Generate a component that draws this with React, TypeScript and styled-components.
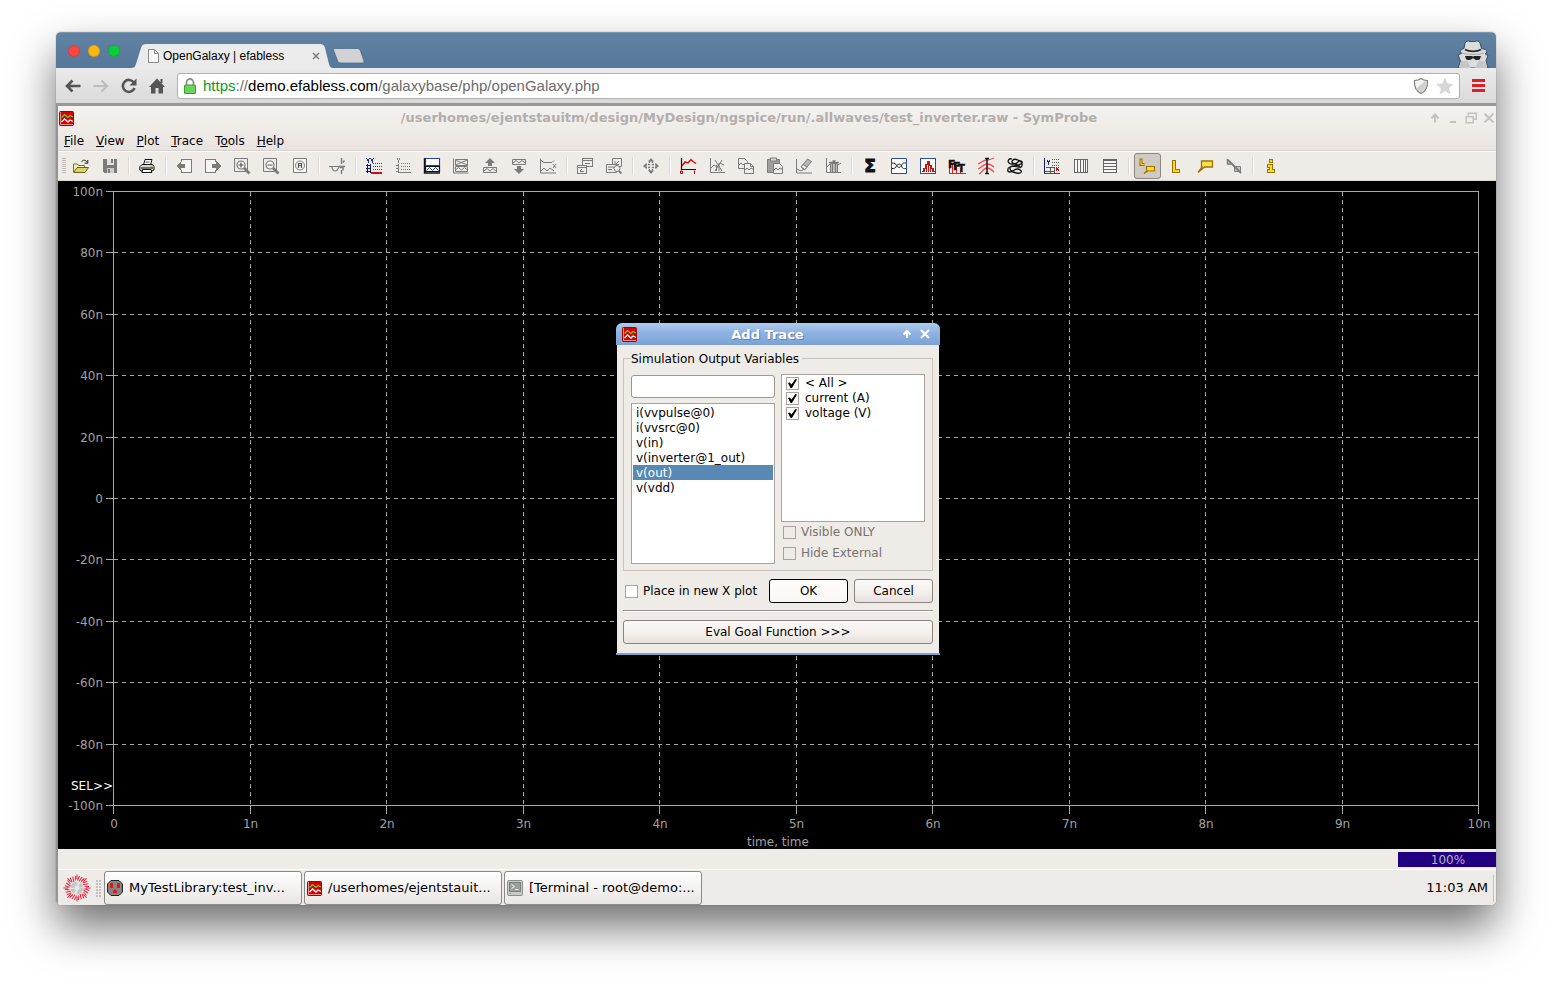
import React from "react";
import styled, { createGlobalStyle, css } from "styled-components";

const ui = '"DejaVu Sans", Verdana, sans-serif';
const chromeFont = '"Liberation Sans", Arial, sans-serif';
const panel = "#efebe7";
const gray = "#7d7b79";

const GlobalStyle = createGlobalStyle`
  *, *::before, *::after { box-sizing: border-box; }
  body { margin: 0; background: #fff; font: 12px/15px ${ui}; color: #000; }
  button, input, select { font: inherit; color: inherit; margin: 0; }
`;

const Page = styled.div`
  min-height: 100vh;
  padding: 32px 56px 80px;
  display: flex;
  flex-direction: column;
`;

const BrowserWindow = styled.div`
  flex: 1;
  display: flex;
  flex-direction: column;
  border-radius: 5px;
  overflow: hidden;
`;

const WindowShadow = styled.div`
  flex: 1;
  display: flex;
  flex-direction: column;
  border-radius: 5px;
  box-shadow: 0 0 1px rgba(0, 0, 0, 0.6), 0 22px 44px rgba(0, 0, 0, 0.56);
`;

/* ---------- browser frame ---------- */

const TabStrip = styled.header`
  height: 36px;
  display: flex;
  align-items: flex-end;
  padding: 0 7px 0 12px;
  background: linear-gradient(#6282a2, #55779a);
  border-top: 1px solid #7d98b3;
`;

const Lights = styled.div`
  display: flex;
  gap: 8px;
  align-self: center;
  margin-right: 11px;
`;

const Light = styled.button<{ $color: string }>`
  width: 12px;
  height: 12px;
  padding: 0;
  border: 1px solid rgba(0, 0, 0, 0.12);
  border-radius: 50%;
  background: ${(p) => p.$color};
`;

const Tab = styled.div`
  position: relative;
  width: 202px;
  height: 24px;
  display: flex;
  align-items: center;
  padding: 0 13px 0 17px;
  font: 12px/16px ${chromeFont};
`;

const TabShape = styled.svg`
  position: absolute;
  inset: 0;
`;

const PageGlyph = styled.svg`
  position: relative;
`;

const TabLabel = styled.span`
  position: relative;
  flex: 1;
  margin-left: 4px;
  white-space: nowrap;
`;

const BareButton = styled.button`
  position: relative;
  padding: 0;
  border: 0;
  background: none;
  display: flex;
  align-items: center;
  justify-content: center;
`;

const NewTab = styled(BareButton)`
  margin-bottom: 4px;
`;

const Incognito = styled.svg`
  margin-left: auto;
`;

const NavBar = styled.nav`
  height: 38px;
  display: flex;
  align-items: center;
  padding: 0 11px 0 3px;
  background: linear-gradient(#ebebeb, #d9d9d9);
  border-bottom: 3px solid #989898;
`;

const NavButton = styled(BareButton)`
  width: 28px;
  height: 24px;
`;

const AddressBar = styled.div`
  flex: 1;
  height: 26px;
  margin-left: 6px;
  padding: 0 5px 0 6px;
  display: flex;
  align-items: center;
  gap: 7px;
  background: #fff;
  border: 1px solid #b0b0b0;
  border-radius: 3px;
`;

const Url = styled.div`
  flex: 1;
  font: 15px/18px ${chromeFont};
  color: #6c6c6c;
  white-space: nowrap;
`;

const Scheme = styled.span`
  color: #0a9a1c;
`;

const Host = styled.span`
  color: #000;
`;

const MenuToggle = styled(BareButton)`
  width: 14px;
  margin-left: 11px;
`;

/* ---------- application ---------- */

const Viewer = styled.main`
  flex: 1;
  display: flex;
  flex-direction: column;
  border-left: 2px solid #949494;
  background: ${panel};
`;

const AppTitleBar = styled.div`
  height: 24px;
  display: flex;
  align-items: center;
  padding-left: 1px;
  background: linear-gradient(#f3f2f1, ${panel});
`;

const AppTitle = styled.h1`
  flex: 1;
  margin: 0;
  font: bold 13px/16px ${ui};
  text-align: center;
  color: #b3aeab;
  white-space: nowrap;
`;

const WindowButton = styled(BareButton)`
  width: 18px;
  height: 18px;
`;

const WindowButtons = styled.div`
  display: flex;

  ${WindowButton} {
    padding-left: 4px;
  }
`;

const MenuBar = styled.div`
  height: 21px;
  display: flex;
  align-items: center;
  background: linear-gradient(${panel}, #e9e3df);
`;

const MenuItem = styled.button`
  padding: 0 6px;
  border: 0;
  background: none;
  line-height: 18px;
`;

const ToolBar = styled.div`
  height: 30px;
  display: flex;
  align-items: center;
  border-top: 1px solid #fbfaf9;
  border-bottom: 1px solid #dcd7d3;
  background: ${panel};
  box-shadow: 0 -1px 0 #d8d2ce;
`;

const Grip = styled.div`
  width: 4px;
  height: 16px;
  margin: 0 1px 0 4px;
  background: repeating-linear-gradient(#c0bbb8 0 1px, transparent 1px 2px);
`;

const ToolSeparator = styled.div`
  width: 2px;
  height: 18px;
  margin: 0 3px;
  border-left: 1px solid #dcd7d3;
  border-right: 1px solid #fff;
`;

const ToolButton = styled.button<{ $active?: boolean }>`
  width: 27px;
  height: 26px;
  margin: 0 1px;
  padding: 0 1px 0 0;
  display: flex;
  align-items: center;
  justify-content: center;
  border: 1px solid transparent;
  border-radius: 3px;
  background: none;
  ${(p) =>
    p.$active &&
    css`
      border-color: #8d8681;
      background: #d0cac5;
    `}
`;

const PlotArea = styled.section`
  position: relative;
  flex: 1;
  min-height: 520px;
  display: flex;
  padding: 10px 18px 44px 55px;
  background: #000;
`;

const PlotFrame = styled.div`
  flex: 1;
  display: flex;
`;

const PlotSvg = styled.svg`
  flex: 1;
  width: 100%;
  overflow: visible;
  font: 12px ${ui};
  fill: #a0a0a0;
  stroke-width: 1px;
`;

const AxisTitle = styled.div`
  position: absolute;
  left: 0;
  right: 0;
  bottom: 0;
  padding-left: 2px;
  line-height: 14px;
  text-align: center;
  color: #a0a0a0;
`;

const StatusBar = styled.div`
  height: 21px;
  display: flex;
  justify-content: flex-end;
  padding: 3px 0 2px;
  border-bottom: 1px solid #fff;
`;

const Progress = styled.div`
  width: 98px;
  height: 15px;
  padding-left: 2px;
  line-height: 17px;
  text-align: center;
  background: #200080;
  color: #b8b4c4;
`;

const TaskBar = styled.footer`
  height: 35px;
  display: flex;
  align-items: center;
  gap: 2px;
  padding: 1px 1px 0 4px;
  background: #eeeae8;
  font: 13px/16px ${ui};
`;

const StartButton = styled(BareButton)`
  width: 30px;
`;

const TaskGrip = styled.div`
  width: 5px;
  height: 17px;
  margin: 0 1px 0 2px;
  background: radial-gradient(circle at 1px 1px, #c4c0bd 1px, transparent 1px) 0 0 / 3px 3px;
`;

const TaskButton = styled.button`
  width: 198px;
  height: 34px;
  display: flex;
  align-items: center;
  gap: 6px;
  padding: 0 2px;
  border: 1px solid #8d8987;
  border-radius: 3px;
  background: linear-gradient(#fff, #f4f2f1 50%, #e9e5e3);
  white-space: nowrap;
  text-align: left;
`;

const Clock = styled.time`
  margin-left: auto;
  padding-right: 3px;
`;

const ClockEdge = styled.div`
  width: 2px;
  height: 27px;
  border-left: 1px solid #c4c0bd;
`;

/* ---------- dialog ---------- */

const Dialog = styled.div`
  position: absolute;
  top: 142px;
  left: calc(50% - 161px);
  width: 324px;
  border-bottom: 2px solid #7ba2d6;
  border-radius: 6px 6px 0 0;
`;

const DialogTitleBar = styled.div`
  height: 22px;
  display: flex;
  align-items: center;
  padding: 0 6px;
  border-radius: 6px 6px 0 0;
  background: linear-gradient(#aecbee, #8fb2e2 45%, #7ba2d6);
`;

const DialogTitle = styled.h2`
  flex: 1;
  margin: 0;
  font: bold 13px/20px ${ui};
  padding-top: 2px;
  text-align: center;
  color: #fff;
  text-shadow: 1px 1px 0 #5d84b9;
`;

const DialogBody = styled.form`
  margin: 0 1px;
  padding: 6px 6px 9px;
  background: ${panel};
`;

const Group = styled.fieldset`
  margin: 0;
  padding: 9px 7px 6px;
  border: 1px solid #c9c3bf;
`;

const Legend = styled.legend`
  height: 14px;
  padding: 0 3px 0 0;
  line-height: 16px;
`;

const Columns = styled.div`
  display: grid;
  grid-template-columns: 1fr 1fr;
  gap: 6px;
`;

const LeftColumn = styled.div`
  min-width: 0;
  display: flex;
  flex-direction: column;
  gap: 5px;
  padding-top: 1px;
`;

const FilterInput = styled.input`
  width: 100%;
  height: 23px;
  padding: 0 4px;
  border: 1px solid #9d9591;
  border-radius: 3px;
  background: #fff;
`;

const VariableList = styled.select`
  width: 100%;
  height: 161px;
  padding: 1px;
  border: 1px solid #a9a29e;
  border-radius: 0;
  outline: 0;
  background: #fff;
  overflow: hidden;

  option {
    height: 15px;
    min-height: 15px;
    padding: 1px 3px 0;
    line-height: 15px;
  }
  option:checked {
    background: #5888b5 linear-gradient(#5888b5, #5888b5);
    color: #fff;
  }
`;

const KindBox = styled.div`
  height: 148px;
  padding: 1px 4px;
  border: 1px solid #a9a29e;
  background: #fff;
`;

const CheckLabel = styled.label<{ $gap: number; $height: number; $muted?: boolean }>`
  height: ${(p) => p.$height}px;
  display: flex;
  align-items: center;
  gap: ${(p) => p.$gap}px;
  white-space: nowrap;
  color: ${(p) => (p.$muted ? "#767270" : "#000")};
`;

const OptionRows = styled.div`
  padding-left: 2px;
`;

const CheckBox = styled.input`
  appearance: none;
  flex: none;
  width: 13px;
  height: 13px;
  display: grid;
  place-content: center;
  border: 1px solid #a9a29e;
  background: #fff;

  &:disabled {
    background: ${panel};
  }
  &:checked::after {
    content: "";
    width: 9px;
    height: 9px;
    background: #000;
    clip-path: polygon(0 45%, 20% 38%, 38% 62%, 82% 0, 100% 6%, 44% 100%, 28% 100%);
  }
`;

const Actions = styled.div`
  display: flex;
  align-items: center;
  gap: 6px;
  margin-top: 8px;
  padding-left: 2px;
`;

const Spacer = styled.div`
  flex: 1;
`;

const DialogButton = styled.button<{ $primary?: boolean; $wide?: boolean }>`
  width: ${(p) => (p.$wide ? "100%" : "80px")};
  height: 24px;
  padding: 0;
  border: 1px solid ${(p) => (p.$primary ? "#000" : "#8a8380")};
  border-radius: 3px;
  background: ${(p) => (p.$primary ? "linear-gradient(#fffdfb, #faf6f3)" : "linear-gradient(#fbf9f8, #f3efec 60%, #e6e0dc)")};
`;

const Rule = styled.hr`
  height: 2px;
  margin: 7px 0 8px;
  border: 0;
  border-top: 1px solid #9a9491;
  border-bottom: 1px solid #fff;
`;

/* ---------- icons ---------- */

type IconProps = { children: React.ReactNode; size?: number; soft?: boolean };

const Icon = ({ children, size = 16, soft }: IconProps) => (
  <svg
    width={size}
    height={size}
    viewBox="0 0 16 16"
    fill="none"
    stroke={gray}
    shapeRendering={soft ? "auto" : "crispEdges"}
    overflow="visible"
    aria-hidden="true"
  >
    {children}
  </svg>
);

const ProbeIcon = () => (
  <svg width="15" height="15" viewBox="0 0 15 15" fill="none" aria-hidden="true">
    <rect x="0.5" y="0.5" width="14" height="14" rx="1" fill="#d80000" stroke="#a00000" />
    <path d="M1.500 1v12.500h12.500" stroke="#f4b0b0" strokeWidth="0.800" />
    <path d="M2.500 6.500 5.500 3.500 9 6.500l2-2 3 1.500" stroke="#5fcf2a" strokeWidth="1.200" />
    <path d="M2.500 11 5.500 8 9 11l2-2 3 1.500" stroke="#fff" strokeWidth="1.300" />
  </svg>
);

const dots = (x: number, y: number, w: number, h: number) => {
  const out = [];
  for (let i = 0; i < w; i++)
    for (let j = 0; j < h; j++)
      out.push(<rect key={`${i}-${j}`} x={x + i * 2} y={y + j * 3} width="1" height="1" stroke="none" />);
  return out;
};

const tools: Record<string, React.ReactNode> = {
  Open: (
    <Icon soft>
      <path d="M.5 14V6h4l1 1.500h6V10" fill="#f6f2a8" stroke="#77702a" />
      <path d="M.7 14.500 4 9.500h11.500l-3.500 5Z" fill="#d9d274" stroke="#6a6420" />
      <path d="M8.500 4c1.500-2.500 4-2.500 5.500.5M14.800 2v3.200h-3.200" stroke="#222" />
    </Icon>
  ),
  Save: (
    <Icon>
      <path d="M1 1h14v14H2l-1-1Z" fill={gray} stroke="none" />
      <path d="M5 1h7v6H5Z" fill="#e4e0dd" stroke="none" />
      <path d="M5 10h7v5H5Z" fill="#cfcbc8" stroke="none" />
      <path d="M6 11h2v4H6ZM9 1h2v4H9Z" fill={gray} stroke="none" />
    </Icon>
  ),
  Print: (
    <Icon soft>
      <path d="M4.500 7 6 1.500h7L11.500 7" fill="#fff" stroke="#111" />
      <path d="M6.500 4h4" stroke="#555" />
      <path d="M1 8.500 3 6.500h10.500l1.500 2V12L13 13H2L.7 12Z" fill="#d8d6d4" stroke="#111" />
      <path d="M2 10h12" stroke="#111" />
      <path d="M3.500 11.500h8.500l.8 3H3Z" fill="#fff" stroke="#111" />
      <path d="M11.500 8.500h2" stroke="#8cc63f" />
    </Icon>
  ),
  "Previous page": (
    <Icon>
      <path d="M5.500 4V1.500h10v13h-10V12" fill="#f8f6f4" />
      <path d="M0 8 5 3v3h4v4H5v3Z" fill={gray} stroke="none" />
    </Icon>
  ),
  "Next page": (
    <Icon>
      <path d="M10.500 4V1.500H.5v13h10V12" fill="#f8f6f4" />
      <path d="M16 8l-5-5v3H7v4h4v3Z" fill={gray} stroke="none" />
    </Icon>
  ),
  "Zoom in": (
    <Icon soft>
      <path d="M.5.500h13v13H.5Z" />
      <circle cx="7" cy="7" r="4" fill="#f8f6f4" strokeWidth="1.200" />
      <path d="M7 4.500v5M4.500 7h5" stroke="#555" strokeWidth="1.200" />
      <path d="m10 10 5.500 5.500" strokeWidth="2.800" />
    </Icon>
  ),
  "Zoom out": (
    <Icon soft>
      <path d="M.5.500h13v13H.5Z" />
      <circle cx="7" cy="7" r="4" fill="#f8f6f4" strokeWidth="1.200" />
      <path d="M4.500 7h5" stroke="#555" strokeWidth="1.200" />
      <path d="m10 10 5.500 5.500" strokeWidth="2.800" />
    </Icon>
  ),
  "Zoom all": (
    <Icon soft>
      <path d="M1.500.500h13v14h-13Z" fill="#f8f6f4" />
      <circle cx="8" cy="7.500" r="4.500" />
      <path d="M6.500 10V5.500h3V10M6.500 7.500h3" stroke="#555" strokeWidth="1.200" />
    </Icon>
  ),
  Cut: (
    <Icon soft>
      <path d="M0 8.500h9M3 9c0 2 1.500 4 3.500 4S9 11 10 9" strokeWidth="1.200" />
      <path d="M12.500 0v6M12.500 12v4M9 8.500h7" strokeWidth="1.400" />
      <path d="M11 9.500h3v3M14 4.500l1.500-2" strokeWidth="1.500" />
    </Icon>
  ),
  "Add Y axis": (
    <Icon>
      <path d="M.5.500 2 3v2M3.500.500 2 3M4.500.500 6 3v2M7.500.500 6 3" stroke="#1c2f86" />
      <path d="M1.500 6v9M4.500 6v9" stroke="#0d1c62" />
      <path d="M0 7.500h5M0 10.500h5M0 13.500h5" stroke="#0d1c62" />
      <g fill="#444">{dots(7, 5, 5, 3)}</g>
      <path d="M5 15h11" stroke="#cc1111" strokeWidth="2" />
    </Icon>
  ),
  "Delete Y axis": (
    <Icon>
      <path d="M2 .5 3.500 3v2M5 .5 3.500 3" />
      <path d="M3.500 6v9M1 7.500h3M1 10.500h3M1 13.500h3" />
      <g fill={gray}>{dots(6, 5, 5, 3)}</g>
      <path d="M3 14.500h13" />
    </Icon>
  ),
  "Add plot": (
    <Icon soft>
      <path d="M1.500.500h14v7h-14Z" fill="#fff" stroke="#1b45b4" strokeWidth="1.200" />
      <path d="M1.500 8.500h14v5h-14Z" fill="#fff" stroke="#111" strokeWidth="1.200" />
      <path d="m2.500 12.500 3-3 3 3 3-3 3 3" stroke="#1b45b4" />
      <path d="M.5 0v15h15.500" stroke="#111" strokeWidth="1.400" />
    </Icon>
  ),
  "Delete plot": (
    <Icon soft>
      <path d="M2.500 1.500h12v6h-12ZM2.500 8.500h12v5h-12ZM2 2l12.500 5M14.500 2 2 7" />
      <path d="m2.500 12 3-2.500 3 2.500 3-2.500 3 2.500" />
      <path d="M.5.500v14.500h15" />
    </Icon>
  ),
  "Move plot up": (
    <Icon soft>
      <path d="m8 0 5 5h-3v3H6V5H3Z" fill={gray} stroke="none" />
      <path d="M1.500 9.500h13v5h-13Z" />
      <path d="m2 13 3-2.500L8 13l3-2.500 3 2.500" />
    </Icon>
  ),
  "Move plot down": (
    <Icon soft>
      <path d="M1.500 1.500h13v5h-13Z" />
      <path d="m2 5 3-2.500L8 5l3-2.500L14 5" />
      <path d="m8 16 5-5h-3V8H6v3H3Z" fill={gray} stroke="none" />
    </Icon>
  ),
  "Sync plots": (
    <Icon soft>
      <path d="M.5.500v14.500H16" />
      <path d="m1 2.500 3 2h8l2-2M1 13l3-3 3 3 3-3 4 3M13 6l3 4M16 6l-3 4" />
    </Icon>
  ),
  Windows: (
    <Icon>
      <path d="M5.500.500h10v8h-10Z" fill={panel} />
      <path d="M6 2h9M8 5.500h5" />
      <path d="M.5 7.500h9v8h-9Z" fill={panel} />
      <path d="M1 9h8M3 13l2-2M3 13.500h4" />
    </Icon>
  ),
  "Find window": (
    <Icon soft>
      <path d="M6.500.500h9v8h-9ZM9 3v3.500h4M10 6l3-3" />
      <path d="M.5 6.500h10v8H.5Z" fill={panel} />
      <path d="M2 9h6M2 11.500h4" />
      <circle cx="11" cy="10.500" r="3" fill={panel} />
      <path d="m13 13 2.500 2.500" strokeWidth="1.800" />
    </Icon>
  ),
  Pan: (
    <Icon soft>
      <path d="M8 0l3 3.500H5ZM8 16l3-3.500H5ZM0 8l3.500-3v6ZM16 8l-3.500-3v6Z" fill={gray} stroke="none" />
      <path d="M6.500 3v3.500H3M9.500 3v3.500H13M6.500 13V9.500H3M9.500 13V9.500H13" strokeDasharray="2 1" strokeWidth="1.300" />
    </Icon>
  ),
  "Add trace": (
    <Icon soft>
      <path d="M1.500 0v11.500H16" stroke="#111" strokeWidth="1.200" />
      <path d="m2 8 3-4 3 1 3-3.500 2 2 3 2" stroke="#e01010" strokeWidth="1.500" />
      <path d="M.5 13h2v2.500h-2ZM14.500 12.500V16" stroke="#b00000" />
    </Icon>
  ),
  "Delete trace": (
    <Icon soft>
      <path d="M1.500 0v14.500H16" />
      <path d="m2 10 3-3 3 2 3-4 4 2M6 2l7 11M13 2 6 13M7.500 13V7M10 13V5" />
    </Icon>
  ),
  Copy: (
    <Icon soft>
      <path d="M.5.500h6l3 3v7h-9Z" fill={panel} />
      <path d="M6.500 5.500h6l3 3v7h-9Z" fill={panel} />
      <path d="m1 7 2-2 2 2 1-1M7 12l2-2 2 2 2-2 2 1M12.500 5.500v3h3" />
    </Icon>
  ),
  Paste: (
    <Icon soft>
      <path d="M.5 1.500h12v13H.5Z" fill="#a19e9b" />
      <path d="M3.500 0h6v3h-6Z" fill="#dcd8d5" />
      <path d="M6.500 5.500h6l3 3v7h-9Z" fill={panel} />
      <path d="m7 12 2-2 2 2 2-2 2 1" />
    </Icon>
  ),
  Erase: (
    <Icon soft>
      <path d="M.5 1v14H16" />
      <path d="m1 11 4 2 3-2" />
      <path d="M5 9 11.500 1l4 2.500-6.500 8Z" fill="#b9b5b2" />
      <path d="M5 9 7 6.500l4 2.500-2 2.500Z" fill={panel} />
    </Icon>
  ),
  "Erase all": (
    <Icon soft>
      <path d="M1.500 0v14.500H16M2 9l3-3M13 7l3-2" />
      <path d="M5.500 5.500h7v9h-7Z" fill="#c9c5c2" />
      <path d="M4 4.500h10M7.500 3h3M7.500 6v8M10.500 6v8" strokeWidth="1.300" />
    </Icon>
  ),
  Evaluate: (
    <Icon soft>
      <text x="8" y="14" textAnchor="middle" fontFamily="DejaVu Sans" fontWeight="bold" fontSize="17" fill="#111" stroke="#111">
        Σ
      </text>
    </Icon>
  ),
  "Eye diagram": (
    <Icon soft>
      <path d="M.5.500h15v15H.5Z" fill="#fff" stroke="#27508f" />
      <path d="M1 5c3 0 3.500.5 4.500 2.500s4 3 5 0S13 5 15 5M1 10.500c3 0 3.500-.5 4.500-2.500s4-3 5 0 2.500 2.500 4.500 2.500" stroke="#222" />
    </Icon>
  ),
  Histogram: (
    <Icon>
      <path d="M.5.500h15v15H.5Z" fill="#fff" stroke="#27508f" />
      <path d="M4.500 14v-3M6.500 14V6M8.500 14V4M10.500 14V8M12.500 14v-3" stroke="#d01010" />
      <path d="M2 13.500h1v-3h2v-4h2v-3h2v4h2v3h2v3h2" stroke="#d01010" />
    </Icon>
  ),
  FFT: (
    <svg width="18" height="16" viewBox="0 0 18 16" overflow="visible" aria-hidden="true">
      <path d="M1.500 15V3M4.500 15.500V6M8.500 15.500V9M12.500 15.500V10M1 15.500h17" stroke="#e02020" fill="none" />
      <text x="0" y="10" fontFamily="DejaVu Sans" fontWeight="bold" fontSize="11" fill="#111" stroke="#111" strokeWidth="0.500">F</text>
      <text x="5" y="12" fontFamily="DejaVu Sans" fontWeight="bold" fontSize="11" fill="#111" stroke="#111" strokeWidth="0.500">F</text>
      <text x="10" y="14" fontFamily="DejaVu Sans" fontWeight="bold" fontSize="10" fill="#111" stroke="#111" strokeWidth="0.500">T</text>
    </svg>
  ),
  Performance: (
    <Icon soft>
      <path d="M0 6c3-1 5-4 9-4 3 0 5-1 7-2M0 11c3-1 5-5 9-5 3 0 5 1 7 3M1 16c3-1 4-6 8-6 3 0 5 2 7 4" stroke="#f05060" strokeWidth="1.300" />
      <path d="M9 1v14M7 .5h4M7 15.500h4" stroke="#111" strokeWidth="1.500" />
    </Icon>
  ),
  Nyquist: (
    <Icon soft>
      <path
        d="M5 1C2 0 0 3 2 5s7 1 9-1 5-1 4 1-9 3-12 4-3 5 0 5 4-3 7-3 5 2 4 3.500-8 .5-10-2S3 8 6 8s6 2 8 1 1-5-1-6-5-3-7-1-1 3 2 4 5 2 6 4"
        stroke="#111"
        strokeWidth="1.300"
      />
    </Icon>
  ),
  Axes: (
    <Icon>
      <path d="M.5 0v15" stroke="#0d1c62" />
      <path d="M2 9.500h8M6.500 9v6M1 13.500h9M10.500 9v6" stroke="#555" />
      <path d="m3 2 1.500 2.500v2.500M6 2 4.500 4.500" stroke="#1c2f86" />
      <g fill="#555">{dots(8, 1, 4, 3)}</g>
      <path d="m12 9 3 4M15 9l-3 4" stroke="#cc1111" />
      <path d="M0 15.500h16" stroke="#cc1111" />
    </Icon>
  ),
  "Vertical grid": (
    <Icon>
      <path d="M1.500 1.500h13v13h-13Z" fill="#f8f6f4" stroke="#666" />
      <path d="M4.500 2v12M7.500 2v12M10.500 2v12M12.500 2v12" stroke="#666" />
    </Icon>
  ),
  "Horizontal grid": (
    <Icon>
      <path d="M1.500 1.500h13v13h-13Z" fill="#f8f6f4" stroke="#666" />
      <path d="M2 2.500h12M2 5.500h12M2 8.500h12M2 11.500h12" stroke="#666" />
    </Icon>
  ),
  "Cursor labels": (
    <Icon soft>
      <path d="M2 .5v6h3.500" stroke="#9a7400" strokeWidth="3" />
      <path d="M2 1.500v5h3" stroke="#ffd51e" strokeWidth="1" />
      <path d="M7.500 8.500h8v4.500H9L5 15.500 8 13h-.5Z" fill="#ffdb2e" stroke="#9a7400" strokeWidth="1.200" />
    </Icon>
  ),
  Marker: (
    <Icon>
      <path d="M5.500 2v11h6" stroke="#9a7400" strokeWidth="4" />
      <path d="M5.500 3v10H11" stroke="#ffd51e" strokeWidth="2" />
    </Icon>
  ),
  Note: (
    <Icon soft>
      <path d="M4.500 3h11v6H7.500L1 14.500 5 9h-.5Z" fill="#ffe04a" stroke="#9a7400" strokeWidth="1.300" />
    </Icon>
  ),
  "Hide labels": (
    <Icon soft>
      <path d="M1.500 1v5h4" strokeWidth="1.500" />
      <path d="M8.500 8.500h6v5h-6Z" fill="#c9c5c2" />
      <path d="m2 2 13 13" strokeWidth="2" />
    </Icon>
  ),
  Info: (
    <Icon>
      <path d="M6.500 1.500h3v3h-3Z" fill="#ffdb2e" stroke="#9a7400" />
      <path d="M4.500 6.500h5v5h2v3h-7v-3h2v-2h-2Z" fill="#ffdb2e" stroke="#9a7400" />
    </Icon>
  ),
};

const toolGroups: string[][] = [
  ["Open", "Save"],
  ["Print"],
  ["Previous page", "Next page", "Zoom in", "Zoom out", "Zoom all"],
  ["Cut"],
  ["Add Y axis", "Delete Y axis", "Add plot", "Delete plot", "Move plot up", "Move plot down", "Sync plots"],
  ["Windows", "Find window"],
  ["Pan"],
  ["Add trace", "Delete trace", "Copy", "Paste", "Erase", "Erase all"],
  ["Evaluate", "Eye diagram", "Histogram", "FFT", "Performance", "Nyquist"],
  ["Axes", "Vertical grid", "Horizontal grid"],
  ["Cursor labels", "Marker", "Note", "Hide labels"],
  ["Info"],
];

const menus: [string, string, string][] = [
  ["", "F", "ile"],
  ["", "V", "iew"],
  ["", "P", "lot"],
  ["", "T", "race"],
  ["T", "o", "ols"],
  ["", "H", "elp"],
];

const yLabels = ["100n", "80n", "60n", "40n", "20n", "0", "-20n", "-40n", "-60n", "-80n", "-100n"];
const xLabels = ["0", "1n", "2n", "3n", "4n", "5n", "6n", "7n", "8n", "9n", "10n"];
const variables = ["i(vvpulse@0)", "i(vvsrc@0)", "v(in)", "v(inverter@1_out)", "v(out)", "v(vdd)"];
const kinds = ["< All >", "current (A)", "voltage (V)"];

const Plot = () => (
  <PlotFrame>
    <PlotSvg role="img" aria-label="Empty waveform plot">
      <g stroke="#a8a8a8" shapeRendering="crispEdges" transform="translate(0.6 0.5)">
        {yLabels.map((label, i) => (
          <g key={label}>
            <line x1="-8" x2="0" y1={`${i * 10}%`} y2={`${i * 10}%`} />
            {i > 0 && i < 10 && (
              <line x1="0" x2="100%" y1={`${i * 10}%`} y2={`${i * 10}%`} strokeDasharray="4 4" />
            )}
          </g>
        ))}
        {xLabels.map((label, i) => (
          <g key={label}>
            <svg y="100%" overflow="visible">
              <line x1={`${i * 10}%`} x2={`${i * 10}%`} y1="0" y2="8" />
            </svg>
            {i > 0 && i < 10 && (
              <line x1={`${i * 10}%`} x2={`${i * 10}%`} y1="0" y2="100%" strokeDasharray="4 4" />
            )}
          </g>
        ))}
        <rect width="100%" height="100%" fill="none" />
      </g>
      {yLabels.map((label, i) => (
        <text key={label} x="-10" y={`${i * 10}%`} dy="5" textAnchor="end">
          {label}
        </text>
      ))}
      {xLabels.map((label, i) => (
        <text key={label} x={`${i * 10}%`} y="100%" dx="1" dy="23" textAnchor="middle">
          {label}
        </text>
      ))}
      <text x="0" y="100%" dy="-15" textAnchor="end" fill="#fff">
        SEL&gt;&gt;
      </text>
    </PlotSvg>
  </PlotFrame>
);

const AddTraceDialog = () => (
  <Dialog role="dialog" aria-labelledby="add-trace-title">
    <DialogTitleBar>
      <ProbeIcon />
      <DialogTitle id="add-trace-title">Add Trace</DialogTitle>
      <WindowButton aria-label="Shade">
        <svg width="10" height="10" viewBox="0 0 10 10" aria-hidden="true">
          <path d="M5 9V3M1.500 5.500 5 2l3.500 3.500" fill="none" stroke="#fff" strokeWidth="2" />
        </svg>
      </WindowButton>
      <WindowButton aria-label="Close">
        <svg width="10" height="10" viewBox="0 0 10 10" aria-hidden="true">
          <path d="m1 1 8 8M9 1 1 9" stroke="#fff" strokeWidth="2.200" />
        </svg>
      </WindowButton>
    </DialogTitleBar>
    <DialogBody onSubmit={(e) => e.preventDefault()}>
      <Group>
        <Legend>Simulation Output Variables</Legend>
        <Columns>
          <LeftColumn>
            <FilterInput type="text" aria-label="Filter variables" />
            <VariableList size={10} defaultValue="v(out)" aria-label="Variables">
              {variables.map((v) => (
                <option key={v}>{v}</option>
              ))}
            </VariableList>
          </LeftColumn>
          <div>
            <KindBox>
              {kinds.map((k) => (
                <CheckLabel key={k} $gap={6} $height={15}>
                  <CheckBox type="checkbox" defaultChecked />
                  {k}
                </CheckLabel>
              ))}
            </KindBox>
            <OptionRows>
              {["Visible ONLY", "Hide External"].map((o) => (
                <CheckLabel key={o} $gap={5} $height={21} $muted>
                  <CheckBox type="checkbox" disabled />
                  {o}
                </CheckLabel>
              ))}
            </OptionRows>
          </div>
        </Columns>
      </Group>
      <Actions>
        <CheckLabel $gap={5} $height={24}>
          <CheckBox type="checkbox" />
          Place in new X plot
        </CheckLabel>
        <Spacer />
        <DialogButton $primary>OK</DialogButton>
        <DialogButton type="button">Cancel</DialogButton>
      </Actions>
      <Rule />
      <DialogButton $wide type="button">
        Eval Goal Function &gt;&gt;&gt;
      </DialogButton>
    </DialogBody>
  </Dialog>
);

const Burst = () => (
  <svg width="28" height="28" viewBox="-14 -14 28 28" fill="none" aria-hidden="true">
    <circle r="4.500" stroke="#c4c6ca" strokeWidth="4" strokeDasharray="7 2 4 1" />
    {Array.from({ length: 8 }, (_, i) => (
      <g key={i} transform={`rotate(${i * 45})`} stroke="#ea2a40" strokeWidth="1.100">
        <path d="M0-13.500V-9M2.500-12 .5-7.500M5-11 2-6.500M7.500-9.500 4-6.500" />
      </g>
    ))}
  </svg>
);

const Browser = () => (
  <>
    <TabStrip>
      <Lights>
        <Light $color="#fb4646" aria-label="Close window" />
        <Light $color="#fdb90c" aria-label="Minimize window" />
        <Light $color="#0bce3c" aria-label="Zoom window" />
      </Lights>
      <Tab>
        <TabShape width="202" height="24" viewBox="0 0 202 24" aria-hidden="true">
          <path d="M0 24c3 0 4-1 5-4L10 4c1-3 2-4 5-4h174c3 0 4 1 5 4l4 16c1 3 2 4 4 4Z" fill="#ebebeb" />
        </TabShape>
        <PageGlyph width="11" height="14" viewBox="0 0 11 14" aria-hidden="true">
          <path d="M.5.500h6l4 4v9H.5ZM6.500.500v4h4" fill="#fafafa" stroke="#8a8a8a" />
        </PageGlyph>
        <TabLabel>OpenGalaxy | efabless</TabLabel>
        <BareButton aria-label="Close tab">
          <svg width="8" height="8" viewBox="0 0 8 8" aria-hidden="true">
            <path d="m1 1 6 6M7 1 1 7" stroke="#7d7d7d" strokeWidth="1.500" />
          </svg>
        </BareButton>
      </Tab>
      <NewTab aria-label="New tab">
        <svg width="31" height="16" viewBox="0 0 31 16" aria-hidden="true">
          <path d="M2 .5h22c2 0 3 1 3.500 2.500L31 13c0 1.500-.5 2-2 2H8c-2 0-3-1-3.500-2.500L.5 2C.5 1 1 .5 2 .5Z" fill="#d2d2d4" stroke="#46678a" strokeWidth="0.700" />
        </svg>
      </NewTab>
      <Incognito width="32" height="28" viewBox="0 0 32 28" aria-hidden="true">
        <path d="M8 3c1-2 3-2.500 5-1.500h5C20 .5 22 1 23 3l1.500 5.500C28 9 30 10 30 12l-2 2 3 1.500-2 5 2 7.500H1l2.500-7L1 15l3.500-1.500-1-2C3.500 10 5 9 7 8.500Z" fill="#dcdcdc" stroke="#384e63" />
        <path d="M8 9.500c4 2.500 12 2.500 16 0" fill="none" stroke="#2a2a2a" strokeWidth="1.800" />
        <path d="M5 13c6 2 16 2 22 0" fill="none" stroke="#a8a8a8" />
        <path d="M8 16h7l1 .8 1-.8h7l-1 3c-1 1.500-5 1.500-6-.5h-2c-1 2-5 2-6 .5Z" fill="#222" />
        <path d="m4 21.500 6-1 4 7.500H2.500ZM28 21.500l-6-1-4 7.500h12Z" fill="#c6c6c6" />
      </Incognito>
    </TabStrip>
    <NavBar>
      <NavButton aria-label="Back">
        <svg width="16" height="14" viewBox="0 0 16 14" fill="none" aria-hidden="true">
          <path d="M15.500 7H2M7.500 1.500 2 7l5.500 5.500" stroke="#555" strokeWidth="2.600" />
        </svg>
      </NavButton>
      <NavButton aria-label="Forward">
        <svg width="16" height="14" viewBox="0 0 16 14" fill="none" aria-hidden="true">
          <path d="M.5 7H14M8.500 1.500 14 7l-5.500 5.500" stroke="#bdbdbd" strokeWidth="2.200" />
        </svg>
      </NavButton>
      <NavButton aria-label="Reload">
        <svg width="16" height="16" viewBox="0 0 16 16" fill="none" aria-hidden="true">
          <path d="M12.800 4.500A6 6 0 1 0 13.500 10" stroke="#555" strokeWidth="2.600" />
          <path d="M15.500.500v7h-7Z" fill="#555" />
        </svg>
      </NavButton>
      <NavButton aria-label="Home">
        <svg width="16" height="16" viewBox="0 0 16 16" aria-hidden="true">
          <path d="M8 .5 16 9h-2v6.500H9.500V10h-3v5.500H2V9H0Z" fill="#555" />
          <path d="M11.500 1h2v4h-2Z" fill="#555" />
        </svg>
      </NavButton>
      <AddressBar>
        <svg width="12" height="16" viewBox="0 0 12 16" aria-hidden="true">
          <path d="M2.500 8V4.500a3.500 3.500 0 0 1 7 0V8" fill="none" stroke="#8f8f8f" strokeWidth="1.800" />
          <rect x="0.500" y="7" width="11" height="8.500" rx="0.500" fill="#6fd25e" stroke="#36a02c" />
        </svg>
        <Url role="textbox" aria-label="Address" tabIndex={0}>
          <Scheme>https</Scheme>://<Host>demo.efabless.com</Host>/galaxybase/php/openGalaxy.php
        </Url>
        <svg width="16" height="18" viewBox="0 0 16 18" aria-hidden="true">
          <path d="M8 1.500c2 1.500 4.500 2 6.500 2 .5 6-1.500 10.500-6.500 13C3 14 1 9.500 1.500 3.500c2 0 4.500-.5 6.500-2Z" fill="#f2f2ee" stroke="#80807c" strokeWidth="1.200" />
          <path d="M3 12 12 4h1.500c0 4-1 8-5.500 11-2-.8-3.500-1.500-5-3Z" fill="#d0d0ca" />
        </svg>
        <svg width="18" height="18" viewBox="0 0 18 18" aria-hidden="true">
          <path d="m9 .5 2.500 6 6.200.5-4.700 4.200 1.500 6.300L9 14l-5.500 3.500L5 11.200.3 7l6.200-.5Z" fill="#d6d6d6" />
        </svg>
      </AddressBar>
      <MenuToggle aria-label="Browser menu">
        <svg width="13" height="13" viewBox="0 0 13 13" aria-hidden="true">
          <path d="M0 1.500h13M0 6.500h13M0 11.500h13" stroke="#dc1f26" strokeWidth="3" />
        </svg>
      </MenuToggle>
    </NavBar>
  </>
);

export default function App() {
  return (
    <Page>
      <GlobalStyle />
      <WindowShadow>
        <BrowserWindow>
          <Browser />
          <Viewer>
            <AppTitleBar>
              <ProbeIcon />
              <AppTitle>/userhomes/ejentstauitm/design/MyDesign/ngspice/run/.allwaves/test_inverter.raw - SymProbe</AppTitle>
              <WindowButtons>
                <WindowButton aria-label="Shade">
                  <Icon size={14} soft><path d="M8 13V5M4 8.500 8 4l4 4.500" stroke="#c3bfbc" strokeWidth="2.200" /></Icon>
                </WindowButton>
                <WindowButton aria-label="Minimize">
                  <Icon size={14} soft><path d="M4.500 12.500h7" stroke="#c3bfbc" strokeWidth="2.200" /></Icon>
                </WindowButton>
                <WindowButton aria-label="Restore">
                  <Icon size={14} soft><path d="M5 5V2.500h9v7h-2.500M2.500 6.500h8v7h-8Z" stroke="#c3bfbc" strokeWidth="1.600" /></Icon>
                </WindowButton>
                <WindowButton aria-label="Close">
                  <Icon size={14} soft><path d="m3 3 10 10M13 3 3 13" stroke="#c3bfbc" strokeWidth="2.400" /></Icon>
                </WindowButton>
              </WindowButtons>
            </AppTitleBar>
            <MenuBar>
              {menus.map(([pre, key, post]) => (
                <MenuItem key={pre + key + post}>
                  {pre}
                  <u>{key}</u>
                  {post}
                </MenuItem>
              ))}
            </MenuBar>
            <ToolBar>
              <Grip />
              {toolGroups.map((group, g) => (
                <React.Fragment key={g}>
                  {g > 0 && <ToolSeparator />}
                  {group.map((name) => (
                    <ToolButton key={name} aria-label={name} $active={name === "Cursor labels"}>
                      {tools[name]}
                    </ToolButton>
                  ))}
                </React.Fragment>
              ))}
            </ToolBar>
            <PlotArea>
              <Plot />
              <AxisTitle>time, time</AxisTitle>
              <AddTraceDialog />
            </PlotArea>
            <StatusBar>
              <Progress role="progressbar" aria-valuenow={100}>100%</Progress>
            </StatusBar>
            <TaskBar>
              <StartButton aria-label="Applications">
                <Burst />
              </StartButton>
              <TaskGrip />
              <TaskButton>
                <svg width="16" height="16" viewBox="0 0 16 16" aria-hidden="true">
                  <path d="M4 .5h8L15.500 4v8L12 15.500H4L.5 12V4Z" fill="#858585" stroke="#222" />
                  <path d="M3 3h3v5H3ZM10 3h3v5h-3ZM6 13V11l2-2 2 2v2Z" fill="#f01010" />
                </svg>
                MyTestLibrary:test_inv...
              </TaskButton>
              <TaskButton>
                <ProbeIcon />
                /userhomes/ejentstauit...
              </TaskButton>
              <TaskButton>
                <svg width="16" height="16" viewBox="0 0 16 16" aria-hidden="true">
                  <rect x="0.500" y="0.500" width="15" height="15" rx="1" fill="#c8cac8" stroke="#8c8e8c" />
                  <rect x="2.500" y="2.500" width="11" height="9" fill="#9aa09c" stroke="#7c807d" />
                  <path d="m4.500 4.500 3 2-3 2M8 9.500h3.500" fill="none" stroke="#f4f4f4" />
                  <path d="M2 13.500h2" stroke="#6fd24a" />
                </svg>
                [Terminal - root@demo:...
              </TaskButton>
              <Clock>11:03 AM</Clock>
              <ClockEdge />
            </TaskBar>
          </Viewer>
        </BrowserWindow>
      </WindowShadow>
    </Page>
  );
}
